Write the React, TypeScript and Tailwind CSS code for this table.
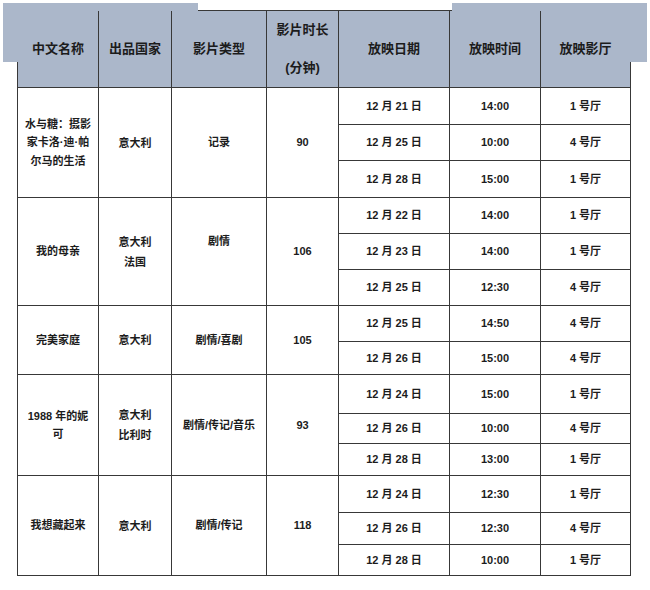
import React from "react";

type Show = { date: string; time: string; hall: string; h: number };
type Film = {
  name: string[];
  country: string[];
  genre: string;
  genreUp?: boolean;
  minutes: string;
  shows: Show[];
};

const films: Film[] = [
  {
    name: ["水与糖：摄影", "家卡洛·迪·帕", "尔马的生活"],
    country: ["意大利"],
    genre: "记录",
    minutes: "90",
    shows: [
      { date: "12 月 21 日", time: "14:00", hall: "1 号厅", h: 37 },
      { date: "12 月 25 日", time: "10:00", hall: "4 号厅", h: 36 },
      { date: "12 月 28 日", time: "15:00", hall: "1 号厅", h: 37 },
    ],
  },
  {
    name: ["我的母亲"],
    country: ["意大利", "法国"],
    genre: "剧情",
    genreUp: true,
    minutes: "106",
    shows: [
      { date: "12 月 22 日", time: "14:00", hall: "1 号厅", h: 36 },
      { date: "12 月 23 日", time: "14:00", hall: "1 号厅", h: 36 },
      { date: "12 月 25 日", time: "12:30", hall: "4 号厅", h: 36 },
    ],
  },
  {
    name: ["完美家庭"],
    country: ["意大利"],
    genre: "剧情/喜剧",
    minutes: "105",
    shows: [
      { date: "12 月 25 日", time: "14:50", hall: "4 号厅", h: 36 },
      { date: "12 月 26 日", time: "15:00", hall: "4 号厅", h: 33 },
    ],
  },
  {
    name: ["1988 年的妮", "可"],
    country: ["意大利", "比利时"],
    genre: "剧情/传记/音乐",
    minutes: "93",
    shows: [
      { date: "12 月 24 日", time: "15:00", hall: "1 号厅", h: 39 },
      { date: "12 月 26 日", time: "10:00", hall: "4 号厅", h: 30 },
      { date: "12 月 28 日", time: "13:00", hall: "1 号厅", h: 32 },
    ],
  },
  {
    name: ["我想藏起来"],
    country: ["意大利"],
    genre: "剧情/传记",
    minutes: "118",
    shows: [
      { date: "12 月 24 日", time: "12:30", hall: "1 号厅", h: 37 },
      { date: "12 月 26 日", time: "12:30", hall: "4 号厅", h: 32 },
      { date: "12 月 28 日", time: "10:00", hall: "1 号厅", h: 31 },
    ],
  },
];

const cell = "border border-[#383838] text-center align-middle p-0";
const head = "border border-[#383838] text-center align-middle p-0 text-[13px] bg-[#abb7ca]";

export default function App() {
  return (
    <div
      className="relative w-[650px] h-[590px] bg-white pt-[10px] pl-[17px] font-bold text-[#1c1c1c]"
      style={{ fontFamily: '"Liberation Sans", "Noto Sans CJK SC", sans-serif' }}
    >
      <table className="border-collapse table-fixed w-[613px] text-[11px] leading-[18.5px]">
        <colgroup>
          <col className="w-[81px]" />
          <col className="w-[73px]" />
          <col className="w-[95px]" />
          <col className="w-[72px]" />
          <col className="w-[111px]" />
          <col className="w-[91px]" />
          <col className="w-[90px]" />
        </colgroup>
        <thead>
          <tr className="h-[76px]">
            <th className={head}>中文名称</th>
            <th className={head}>出品国家</th>
            <th className={head}>影片类型</th>
            <th className={head + " leading-[38px]"}>
              <div>影片时长</div>
              <div>(分钟)</div>
            </th>
            <th className={head}>放映日期</th>
            <th className={head}>放映时间</th>
            <th className={head}>放映影厅</th>
          </tr>
        </thead>
        <tbody>
          {films.map((f) =>
            f.shows.map((s, i) => (
              <tr key={f.minutes + i} style={{ height: s.h }}>
                {i === 0 && (
                  <>
                    <td rowSpan={f.shows.length} className={cell + " px-1"}>
                      {f.name.map((n) => (
                        <div key={n}>{n}</div>
                      ))}
                    </td>
                    <td rowSpan={f.shows.length} className={cell + " leading-[20px]"}>
                      {f.country.map((c) => (
                        <div key={c}>{c}</div>
                      ))}
                    </td>
                    <td
                      rowSpan={f.shows.length}
                      className={cell + (f.genreUp ? " pb-5" : "")}
                    >
                      {f.genre}
                    </td>
                    <td rowSpan={f.shows.length} className={cell}>
                      {f.minutes}
                    </td>
                  </>
                )}
                <td className={cell}>{s.date}</td>
                <td className={cell}>{s.time}</td>
                <td className={cell}>{s.hall}</td>
              </tr>
            ))
          )}
        </tbody>
      </table>

      {/* pasted header patches overlapping the table edge */}
      <div className="absolute left-[3px] top-[3px] w-[195px] h-[8px] bg-[#abb7ca]" />
      <div className="absolute left-[3px] top-[3px] w-[15px] h-[59px] bg-[#abb7ca]" />
      <div className="absolute left-[452px] top-[3px] w-[195px] h-[8px] bg-[#abb7ca]" />
      <div className="absolute left-[629px] top-[3px] w-[18px] h-[59px] bg-[#abb7ca]" />
    </div>
  );
}
